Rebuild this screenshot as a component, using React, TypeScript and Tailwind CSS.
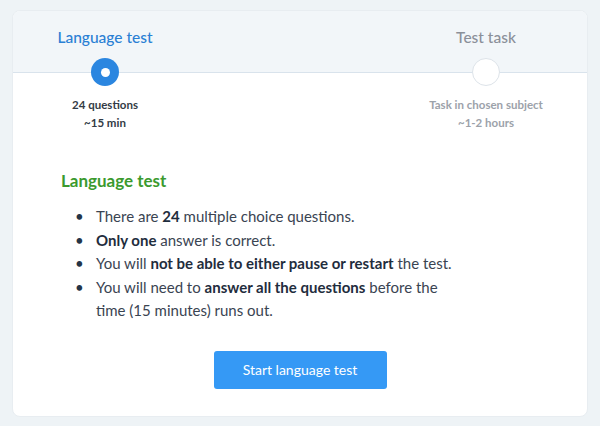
import React from "react";

type Step = {
  title: string;
  lines: string[];
  active: boolean;
};

const steps: Step[] = [
  { title: "Language test", lines: ["24 questions", "~15 min"], active: true },
  { title: "Test task", lines: ["Task in chosen subject", "~1-2 hours"], active: false },
];

function StepCircle({ active }: { active: boolean }) {
  if (active) {
    return (
      <div className="flex h-7 w-7 items-center justify-center rounded-full bg-[#2b86e0]">
        <div className="h-[9px] w-[9px] rounded-full bg-white" />
      </div>
    );
  }
  return <div className="h-7 w-7 rounded-full border border-[#dde3e9] bg-white" />;
}

export default function App() {
  return (
    <div
      className="min-h-[426px] w-[600px] bg-[#eef3f6] px-3 pt-[10px] pb-[10px]"
      style={{ fontFamily: "Lato, 'Open Sans', sans-serif" }}
    >
      <div className="overflow-hidden rounded-lg border border-[#e8edf1] bg-white">
        <div className="flex h-[62px] justify-between border-b border-[#d9e3ec] bg-[#f2f6f9] pl-[12px] pr-[21px]">
          {steps.map((s) => (
            <div key={s.title} className="w-[160px] pt-[14px] text-center">
              <span
                className={
                  s.active
                    ? "text-[15.5px] font-medium leading-[20px] text-[#2a80d4]"
                    : "text-[15.5px] font-medium leading-[20px] text-[#8b9099]"
                }
              >
                {s.title}
              </span>
            </div>
          ))}
        </div>

        <div className="-mt-[15px] flex justify-between pl-[12px] pr-[21px]">
          {steps.map((s) => (
            <div key={s.title} className="flex w-[160px] flex-col items-center">
              <StepCircle active={s.active} />
              <div
                className={
                  s.active
                    ? "mt-[10px] text-center text-[11.5px] font-bold leading-[18px] text-[#333b45]"
                    : "mt-[10px] text-center text-[11.5px] font-bold leading-[18px] text-[#9ca2aa]"
                }
              >
                {s.lines.map((l) => (
                  <div key={l}>{l}</div>
                ))}
              </div>
            </div>
          ))}
        </div>

        <div className="px-[48px] pt-[37px] pb-[27px]">
          <h2 className="text-[17px] font-bold leading-[24px] text-[#3b9a2e]">Language test</h2>

          <ul className="mt-[12px] text-[15px] leading-[23.5px] text-[#3a4452]">
            <li className="flex">
              <span className="w-[35px] pl-[14px] text-[#243447]">•</span>
              <span className="w-[365px]">
                There are <b className="font-bold text-[#1f2d3d]">24</b> multiple choice questions.
              </span>
            </li>
            <li className="flex">
              <span className="w-[35px] pl-[14px] text-[#243447]">•</span>
              <span className="w-[365px]">
                <b className="font-bold text-[#1f2d3d]">Only one</b> answer is correct.
              </span>
            </li>
            <li className="flex">
              <span className="w-[35px] pl-[14px] text-[#243447]">•</span>
              <span className="w-[365px]">
                You will <b className="font-bold text-[#1f2d3d]">not be able to either pause or restart</b> the
                test.
              </span>
            </li>
            <li className="flex">
              <span className="w-[35px] pl-[14px] text-[#243447]">•</span>
              <span className="w-[365px]">
                You will need to <b className="font-bold text-[#1f2d3d]">answer all the questions</b> before the
                time (15 minutes) runs out.
              </span>
            </li>
          </ul>

          <div className="mt-[28px] flex justify-center">
            <button className="h-[38px] w-[173px] rounded-[3px] bg-[#3599f5] text-[14px] text-white">
              Start language test
            </button>
          </div>
        </div>
      </div>
    </div>
  );
}
